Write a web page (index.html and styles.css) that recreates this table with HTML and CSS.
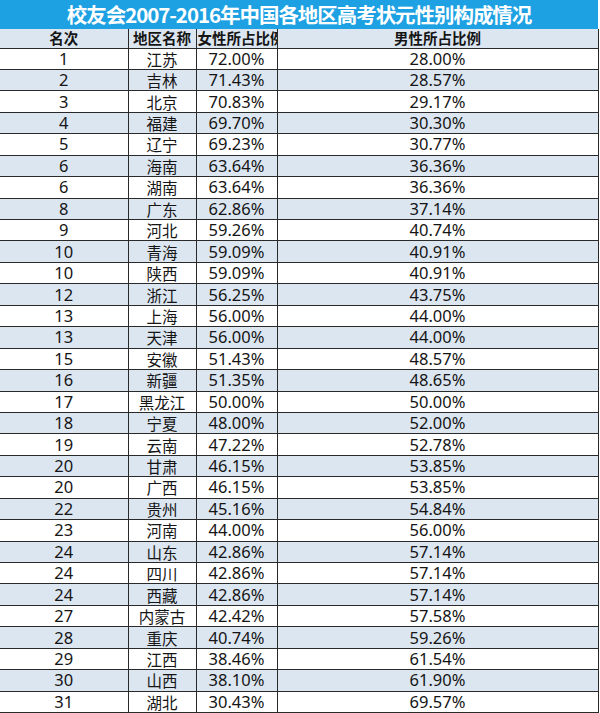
FILE: index.html
```html
<!DOCTYPE html>
<html lang="zh-CN">
<head>
<meta charset="utf-8">
<title>校友会2007-2016年中国各地区高考状元性别构成情况</title>
<link rel="stylesheet" href="styles.css">
</head>
<body>
<div class="sheet">
<table class="grid">
<colgroup>
<col class="c-rank"><col class="c-region"><col class="c-female"><col class="c-male">
</colgroup>
<thead>
<tr class="title-row"><th colspan="4" class="title">校友会2007-2016年中国各地区高考状元性别构成情况</th></tr>
<tr class="head-row">
<th class="h">名次</th><th class="h">地区名称</th><th class="h clip"><span>女性所占比例</span></th><th class="h">男性所占比例</th>
</tr>
</thead>
<tbody>
<tr><td>1</td><td class="cn">江苏</td><td>72.00%</td><td>28.00%</td></tr>
<tr><td>2</td><td class="cn">吉林</td><td>71.43%</td><td>28.57%</td></tr>
<tr><td>3</td><td class="cn">北京</td><td>70.83%</td><td>29.17%</td></tr>
<tr><td>4</td><td class="cn">福建</td><td>69.70%</td><td>30.30%</td></tr>
<tr><td>5</td><td class="cn">辽宁</td><td>69.23%</td><td>30.77%</td></tr>
<tr><td>6</td><td class="cn">海南</td><td>63.64%</td><td>36.36%</td></tr>
<tr><td>6</td><td class="cn">湖南</td><td>63.64%</td><td>36.36%</td></tr>
<tr><td>8</td><td class="cn">广东</td><td>62.86%</td><td>37.14%</td></tr>
<tr><td>9</td><td class="cn">河北</td><td>59.26%</td><td>40.74%</td></tr>
<tr><td>10</td><td class="cn">青海</td><td>59.09%</td><td>40.91%</td></tr>
<tr><td>10</td><td class="cn">陕西</td><td>59.09%</td><td>40.91%</td></tr>
<tr><td>12</td><td class="cn">浙江</td><td>56.25%</td><td>43.75%</td></tr>
<tr><td>13</td><td class="cn">上海</td><td>56.00%</td><td>44.00%</td></tr>
<tr><td>13</td><td class="cn">天津</td><td>56.00%</td><td>44.00%</td></tr>
<tr><td>15</td><td class="cn">安徽</td><td>51.43%</td><td>48.57%</td></tr>
<tr><td>16</td><td class="cn">新疆</td><td>51.35%</td><td>48.65%</td></tr>
<tr><td>17</td><td class="cn">黑龙江</td><td>50.00%</td><td>50.00%</td></tr>
<tr><td>18</td><td class="cn">宁夏</td><td>48.00%</td><td>52.00%</td></tr>
<tr><td>19</td><td class="cn">云南</td><td>47.22%</td><td>52.78%</td></tr>
<tr><td>20</td><td class="cn">甘肃</td><td>46.15%</td><td>53.85%</td></tr>
<tr><td>20</td><td class="cn">广西</td><td>46.15%</td><td>53.85%</td></tr>
<tr><td>22</td><td class="cn">贵州</td><td>45.16%</td><td>54.84%</td></tr>
<tr><td>23</td><td class="cn">河南</td><td>44.00%</td><td>56.00%</td></tr>
<tr><td>24</td><td class="cn">山东</td><td>42.86%</td><td>57.14%</td></tr>
<tr><td>24</td><td class="cn">四川</td><td>42.86%</td><td>57.14%</td></tr>
<tr><td>24</td><td class="cn">西藏</td><td>42.86%</td><td>57.14%</td></tr>
<tr><td>27</td><td class="cn">内蒙古</td><td>42.42%</td><td>57.58%</td></tr>
<tr><td>28</td><td class="cn">重庆</td><td>40.74%</td><td>59.26%</td></tr>
<tr><td>29</td><td class="cn">江西</td><td>38.46%</td><td>61.54%</td></tr>
<tr><td>30</td><td class="cn">山西</td><td>38.10%</td><td>61.90%</td></tr>
<tr><td>31</td><td class="cn">湖北</td><td>30.43%</td><td>69.57%</td></tr>
</tbody>
</table>
</div>
</body>
</html>
```
FILE: styles.css
```css
html, body {
  margin: 0;
  padding: 0;
  background: #ffffff;
}

.sheet {
  width: 600px;
  height: 713px;
  overflow: hidden;
  background: #ffffff;
}

.grid {
  width: 598px;
  border-collapse: collapse;
  table-layout: fixed;
  font-family: "Noto Sans", "Noto Sans CJK SC", sans-serif;
  color: #151515;
}

.c-rank { width: 128px; }
.c-region { width: 68px; }
.c-female { width: 81px; }
.c-male { width: 321px; }

.title-row { height: 29px; }

.title {
  background: #1ea1e2;
  color: #ffffff;
  font-family: "Noto Sans CJK SC", sans-serif;
  font-weight: 700;
  font-size: 20.5px;
  line-height: 29px;
  padding: 0;
  text-align: center;
  white-space: nowrap;
  border: none;
  letter-spacing: -1.05px;
}

.head-row { height: 19px; }

.h {
  background: #dce6f1;
  font-family: "Noto Sans CJK SC", sans-serif;
  font-weight: 700;
  font-size: 14.5px;
  line-height: 18px;
  padding: 0;
  text-align: center;
  white-space: nowrap;
  border-left: 1px solid #2a2a2a;
  border-right: 1px solid #2a2a2a;
  border-bottom: 1px solid #2a2a2a;
  color: #151515;
}

.h:first-child { border-left: none; }

.clip {
  overflow: hidden;
  text-align: left;
  padding-left: 1px;
}

.grid tbody tr { height: 21.45px; }

.grid tbody tr:nth-child(even) td { background: #dce6f1; }

.grid td {
  padding: 0;
  text-align: center;
  font-size: 16.5px;
  line-height: 20px;
  white-space: nowrap;
  border: 1px solid #2a2a2a;
  border-top: none;
}

.grid td:first-child { border-left: none; }

.grid td.cn {
  font-family: "Noto Sans CJK SC", sans-serif;
  font-size: 15.5px;
}
```
